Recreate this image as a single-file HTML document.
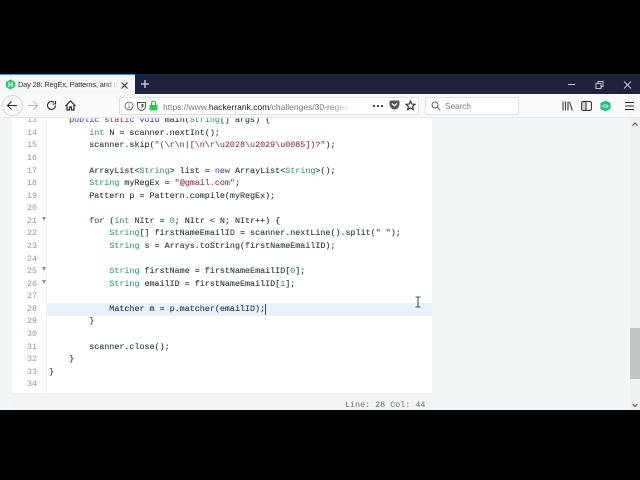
<!DOCTYPE html>
<html><head><meta charset="utf-8"><style>
html,body{margin:0;padding:0;background:#000}
body{width:640px;height:480px;position:relative;overflow:hidden;font-family:"Liberation Sans",sans-serif}
#w{position:absolute;left:0;top:0;width:640px;height:480px;filter:blur(.3px)}
.a{position:absolute}
.l{position:absolute;left:49px;font:8.4px/12px "Liberation Mono",monospace;color:#2f3b40;white-space:pre;height:12px;-webkit-text-stroke:.12px #2f3b40}
.n{position:absolute;left:18px;width:19px;text-align:right;font:8.4px/12px "Liberation Mono",monospace;color:#8f999c}
.k{color:#6f4a8e;-webkit-text-stroke:.12px #6f4a8e}.t{color:#4a9a80;-webkit-text-stroke:.12px #4a9a80}.s{color:#8c3f4c;-webkit-text-stroke:.12px #8c3f4c}
.f{position:absolute;left:42px;width:0;height:0;border-left:2.5px solid transparent;border-right:2.5px solid transparent;border-top:4px solid #8a9296}
</style></head><body><div id="w">
<div class="a" style="left:0;top:0;width:640px;height:480px;background:#000"></div>
<div class="a" style="left:0;top:74px;width:640px;height:20px;background:#20203f"></div>
<div class="a" style="left:0;top:74px;width:135px;height:20px;background:#f5f6f7;border-top:1px solid #3a8ee0;box-sizing:border-box"></div>
<svg class="a" style="left:5px;top:79px" width="11" height="11" viewBox="0 0 11 11"><path d="M5.5 0.5L10 3v5L5.500 10.500 1 8V3z" fill="#2ec866"/><path d="M4 3v5M7 3v5M4 5.500h3" stroke="#fff" stroke-width="1.100" fill="none"/></svg>
<div class="a" style="left:18px;top:79px;width:100px;height:12px;font-size:7.4px;letter-spacing:-.15px;line-height:12px;color:#333;white-space:nowrap;overflow:hidden">Day 28: RegEx, Patterns, and Intr</div>
<div class="a" style="left:106px;top:78px;width:14px;height:14px;background:linear-gradient(90deg,rgba(245,246,247,0),#f5f6f7 80%)"></div>
<svg class="a" style="left:120px;top:81px" width="9" height="9"><path d="M1.500 1.500l6 6M7.500 1.500l-6 6" stroke="#333" stroke-width="1.100"/></svg>
<svg class="a" style="left:140px;top:79px" width="10" height="10"><path d="M5 1v8M1 5h8" stroke="#d8d8e0" stroke-width="1.300"/></svg>
<svg class="a" style="left:566px;top:80px" width="70" height="10" fill="none" stroke="#c8c8d2" stroke-width="1"><path d="M2 4.500h7"/><path d="M30 3.500h5v5h-5zM32 3.500V1.500h5v5h-2" stroke-width="1"/><path d="M58 1.500l7 7M65 1.500l-7 7"/></svg>

<div class="a" style="left:0;top:94px;width:640px;height:24px;background:#f9f9fa;border-bottom:1px solid #e8e8ea;box-sizing:border-box"></div>
<div class="a" style="left:2px;top:95px;width:21px;height:21px;border:1px solid #d6d6d9;border-radius:50%;box-sizing:border-box;background:#fbfbfb"></div>
<svg class="a" style="left:6px;top:100px" width="12" height="11" fill="none" stroke="#2a2a2e" stroke-width="1.100"><path d="M11 5.500H1.500M5.500 1.500l-4 4 4 4"/></svg>
<svg class="a" style="left:27px;top:100px" width="12" height="11" fill="none" stroke="#b8b8bb" stroke-width="1.100"><path d="M1 5.500h9.500M6.500 1.500l4 4-4 4"/></svg>
<svg class="a" style="left:46px;top:100px" width="11" height="11" fill="none" stroke="#2a2a2e" stroke-width="1.100"><path d="M9.500 5.500A4 4 0 1 1 8 2.300"/><path d="M9.500 1v3H6.500"/></svg>
<svg class="a" style="left:65px;top:100px" width="11" height="11" fill="none" stroke="#2a2a2e" stroke-width="1.200"><path d="M0.500 6L5.500 1l5 5M2 5v5h2.500V7h2v3H9V5"/></svg>

<div class="a" style="left:119px;top:97px;width:300px;height:18px;background:#fff;border:1px solid #e0e0e2;border-radius:2px;box-sizing:border-box"></div>
<svg class="a" style="left:124px;top:101px" width="10" height="10" fill="none" stroke="#555" stroke-width="0.800"><circle cx="5" cy="5" r="4"/><path d="M5 4.500v3M5 2.500v1"/></svg>
<svg class="a" style="left:137px;top:101px" width="9" height="10"><path d="M0.500 1.500h8V5C8.500 7.500 6.500 9 4.500 9.800 2.500 9 0.500 7.500 0.500 5z" fill="none" stroke="#555" stroke-width="1"/><path d="M4.500 3h2v2.500L4.500 7.500z" fill="#555"/></svg>
<svg class="a" style="left:149px;top:100px" width="9" height="11"><path d="M0.500 5h8v5.500h-8z" fill="#2ec84a"/><path d="M2.500 5V3.200a2 2 0 0 1 4 0V5" fill="none" stroke="#2ec84a" stroke-width="1.300"/></svg>
<div class="a" style="left:163px;top:100.500px;width:190px;height:12px;font-size:8.5px;line-height:12px;color:#77777c;white-space:nowrap;overflow:hidden">https://www.<span style="color:#1c1c20">hackerrank.com</span>/challenges/30-regex-p</div>
<div class="a" style="left:330px;top:99px;width:24px;height:14px;background:linear-gradient(90deg,rgba(255,255,255,0),#fff)"></div>
<div class="a" style="left:373px;top:105px;width:2px;height:2px;background:#444;box-shadow:4px 0 #444,8px 0 #444"></div>
<svg class="a" style="left:389px;top:100px" width="11" height="10"><path d="M0.500 1.500Q0.500 0.500 1.500 0.500h8q1 0 1 1V4A5 5.500 0 0 1 0.500 4z" fill="#55555a"/><path d="M3 3.500l2.500 2.300L8 3.500" stroke="#fff" stroke-width="1.200" fill="none"/></svg>
<svg class="a" style="left:405px;top:100px" width="11" height="11"><path d="M5.500 1l1.300 3 3.200.3-2.400 2.100.7 3.200-2.800-1.700-2.800 1.700.7-3.200L1 4.300 4.200 4z" fill="none" stroke="#2a2a2e" stroke-width="1.100"/></svg>

<div class="a" style="left:425px;top:97px;width:94px;height:18px;background:#fff;border:1px solid #e0e0e2;border-radius:2px;box-sizing:border-box"></div>
<svg class="a" style="left:431px;top:101px" width="10" height="10" fill="none" stroke="#5a5a5e" stroke-width="1"><circle cx="4" cy="4" r="3"/><path d="M6.300 6.300l3 3"/></svg>
<div class="a" style="left:445px;top:100.500px;font-size:8.2px;line-height:12px;color:#77777c">Search</div>
<svg class="a" style="left:562px;top:101px" width="11" height="10" fill="none" stroke="#3a3a3e" stroke-width="1.100"><path d="M1 0.500v9M3.500 0.500v9M6 0.500v9M7.500 0.800l2.800 8.800"/></svg>
<svg class="a" style="left:581px;top:101px" width="11" height="10" fill="none" stroke="#3a3a3e" stroke-width="1.100"><rect x="0.600" y="0.600" width="9.800" height="8.800" rx="1.500"/><path d="M5 0.600v8.800"/><path d="M1 1h4v8H1z" fill="#3a3a3e" fill-opacity=".2" stroke="none"/></svg>
<svg class="a" style="left:600px;top:100px" width="11" height="12"><path d="M5.500 0.500L10.500 3v6L5.500 11.500.5 9V3z" fill="#1fbf8f"/><path d="M2 6Q5.500 2.500 9 6 5.500 9.500 2 6z" fill="#fff"/><circle cx="5.500" cy="6" r="1.200" fill="#1fbf8f"/></svg>
<div class="a" style="left:625px;top:102px;width:9px;height:1.200px;background:#2a2a2e;box-shadow:0 3.500px #2a2a2e,0 7px #2a2a2e"></div>

<div class="a" style="left:0;top:118px;width:640px;height:292px;background:#f3f6f6"></div>
<div class="a" style="left:12px;top:118px;width:420px;height:275px;background:#fff"></div>
<div class="a" style="left:12px;top:393px;width:420px;height:17px;background:#f3f5f5"></div>
<div class="a" style="left:45.500px;top:118px;width:1px;height:275px;background:#eef0f1"></div>
<div class="a" style="left:47px;top:302.700px;width:385px;height:13px;background:#e9f2fb"></div>
<div class="a" style="left:630px;top:118px;width:10px;height:292px;background:#f0f0f0"></div>
<div class="a" style="left:630px;top:328px;width:10px;height:51px;background:#c3c3c3"></div>
<svg class="a" style="left:632px;top:122px" width="6" height="5" fill="none" stroke="#555" stroke-width="1.100"><path d="M0.500 3.500L3 1l2.500 2.500"/></svg>
<svg class="a" style="left:632px;top:403px" width="6" height="5" fill="none" stroke="#555" stroke-width="1.100"><path d="M0.500 1L3 3.500 5.500 1"/></svg>

<div class="n" style="top:114.200px;clip-path:inset(4px 0 0 0)">13</div>
<div class="n" style="top:126.700px">14</div>
<div class="n" style="top:139.300px">15</div>
<div class="n" style="top:151.900px">16</div>
<div class="n" style="top:164.500px">17</div>
<div class="n" style="top:177px">18</div>
<div class="n" style="top:189.600px">19</div>
<div class="n" style="top:202.200px">20</div>
<div class="n" style="top:214.700px">21</div>
<div class="n" style="top:227.300px">22</div>
<div class="n" style="top:239.900px">23</div>
<div class="n" style="top:252.500px">24</div>
<div class="n" style="top:265px">25</div>
<div class="n" style="top:277.600px">26</div>
<div class="n" style="top:290.200px">27</div>
<div class="n" style="top:302.700px">28</div>
<div class="n" style="top:315.300px">29</div>
<div class="n" style="top:327.900px">30</div>
<div class="n" style="top:340.500px">31</div>
<div class="n" style="top:353px">32</div>
<div class="n" style="top:365.600px">33</div>
<div class="n" style="top:378.200px">34</div>
<div class="f" style="top:217px"></div>
<div class="f" style="top:267px"></div>
<div class="f" style="top:280px"></div>

<div class="l" style="top:114.200px;clip-path:inset(4px 0 0 0)">    <span class="k">public</span> <span class="k">static</span> <span class="k">void</span> main(<span class="t">String</span>[] args) {</div>
<div class="l" style="top:126.700px">        <span class="t">int</span> N = scanner.nextInt();</div>
<div class="l" style="top:139.300px">        scanner.skip(<span class="s">"(\r\n|[\n\r\u2028\u2029\u0085])?"</span>);</div>
<div class="l" style="top:164.500px">        ArrayList&lt;<span class="t">String</span>&gt; list = <span class="k">new</span> ArrayList&lt;<span class="t">String</span>&gt;();</div>
<div class="l" style="top:177px">        <span class="t">String</span> myRegEx = <span class="s">"@gmail.com"</span>;</div>
<div class="l" style="top:189.600px">        Pattern p = Pattern.compile(myRegEx);</div>
<div class="l" style="top:214.700px">        <span class="k">for</span> (<span class="t">int</span> NItr = <span class="t">0</span>; NItr &lt; N; NItr++) {</div>
<div class="l" style="top:227.300px">            <span class="t">String</span>[] firstNameEmailID = scanner.nextLine().split(<span class="s">" "</span>);</div>
<div class="l" style="top:239.900px">            <span class="t">String</span> s = Arrays.toString(firstNameEmailID);</div>
<div class="l" style="top:265px">            <span class="t">String</span> firstName = firstNameEmailID[<span class="t">0</span>];</div>
<div class="l" style="top:277.600px">            <span class="t">String</span> emailID = firstNameEmailID[<span class="t">1</span>];</div>
<div class="l" style="top:302.700px">            Matcher m = p.matcher(emailID);</div>
<div class="l" style="top:315.300px">        }</div>
<div class="l" style="top:340.500px">        scanner.close();</div>
<div class="l" style="top:353px">    }</div>
<div class="l" style="top:365.600px">}</div>
<div class="a" style="left:265px;top:303.500px;width:1px;height:11px;background:#444"></div>
<svg class="a" style="left:414px;top:296px" width="8" height="12" fill="none" stroke="#555" stroke-width="1.100"><path d="M1.500 1h5M1.500 11h5M4 1v10"/></svg>
<div class="a" style="left:345px;top:399.500px;font:8.400px/11px 'Liberation Mono',monospace;color:#66757c;white-space:pre">Line: 28 Col: 44</div>
<div class="a" style="left:0;top:410px;width:640px;height:70px;background:#000"></div>
</div></body></html>
